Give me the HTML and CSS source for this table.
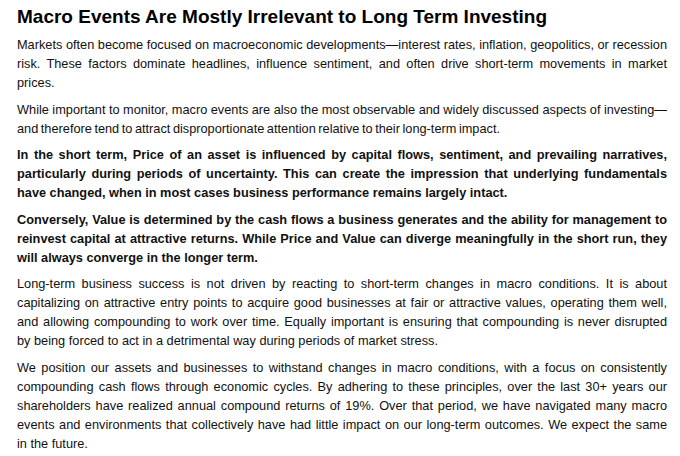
FILE: index.html
```html
<!DOCTYPE html>
<html lang="en">
<head>
<meta charset="utf-8">
<title>Macro Events Are Mostly Irrelevant to Long Term Investing</title>
<link rel="stylesheet" href="styles.css">
</head>
<body>
<article class="article">
<h1 class="title">Macro Events Are Mostly Irrelevant to Long Term Investing</h1>
<p class="para">Markets often become focused on macroeconomic developments—interest rates, inflation, geopolitics, or recession risk. These factors dominate headlines, influence sentiment, and often drive short-term movements in market prices.</p>
<p class="para tight">While important to monitor, macro events are also the most observable and widely discussed aspects of investing&#8288;—<wbr>and therefore tend to attract disproportionate attention relative to their long-term impact.</p>
<p class="para strong">In the short term, Price of an asset is influenced by capital flows, sentiment, and prevailing narratives, particularly during periods of uncertainty. This can create the impression that underlying fundamentals have changed, when in most cases business performance remains largely intact.</p>
<p class="para strong">Conversely, Value is determined by the cash flows a business generates and the ability for management to reinvest capital at attractive returns. While Price and Value can diverge meaningfully in the short run, they will always converge in the longer term.</p>
<p class="para">Long-term business success is not driven by reacting to short-term changes in macro conditions. It is about capitalizing on attractive entry points to acquire good businesses at fair or attractive values, operating them well, and allowing compounding to work over time. Equally important is ensuring that compounding is never disrupted by&nbsp;being forced to act in a detrimental way during periods of market stress.</p>
<p class="para">We position our assets and businesses to withstand changes in macro conditions, with a focus on consistently compounding cash flows through economic cycles. By adhering to these principles, over the last 30+ years our shareholders have realized annual compound returns of 19%. Over that period, we have navigated many macro events and environments that collectively have had little impact on our long-term outcomes. We expect the same in&nbsp;the future.</p>
</article>
</body>
</html>
```

FILE: styles.css
```css
html, body {
  margin: 0;
  padding: 0;
  background: #ffffff;
}
body {
  font-family: "Liberation Sans", Arial, sans-serif;
  color: #111111;
}
.article {
  padding: 5px 13px 0 17px;
}
.title {
  margin: 0 0 6px 0;
  font-size: 19px;
  line-height: 24px;
  font-weight: bold;
  color: #000000;
}
.para {
  margin: 0 0 7.6px 0;
  font-size: 12.75px;
  line-height: 19px;
  text-align: justify;
}
.tight {
  word-spacing: -1px;
}
.strong {
  font-weight: bold;
}
```
